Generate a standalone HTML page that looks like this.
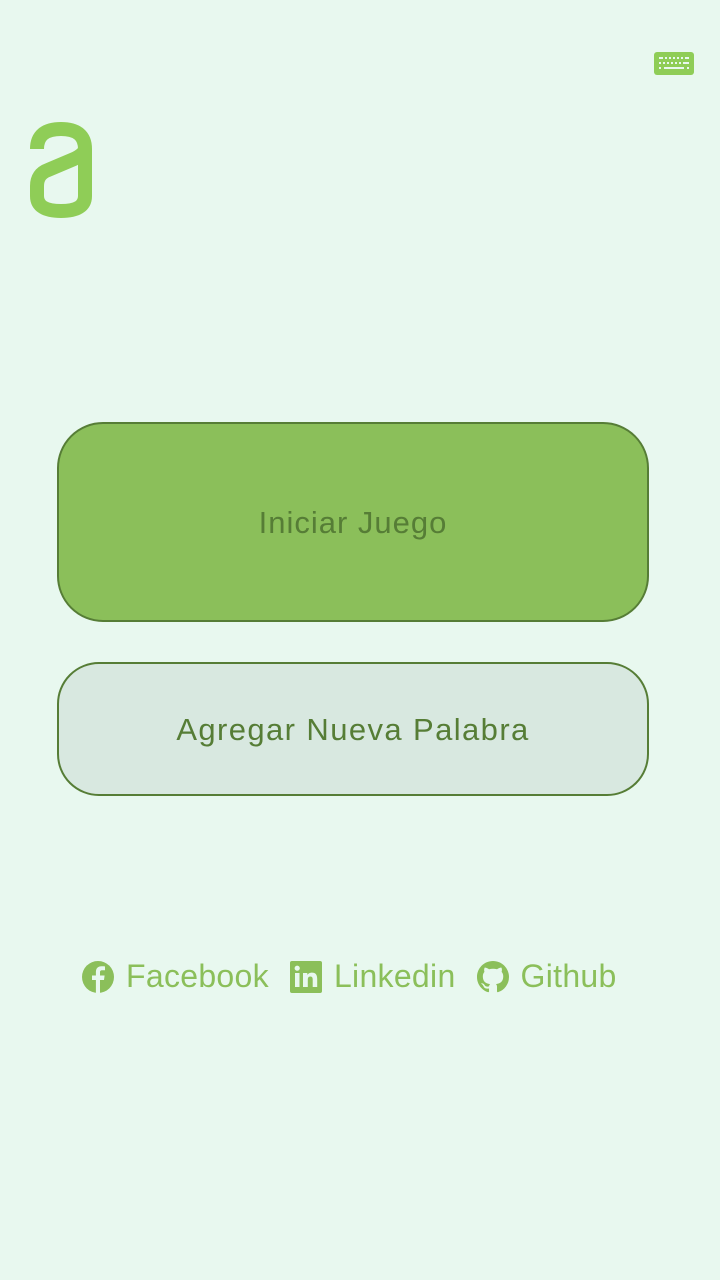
<!DOCTYPE html>
<html><head><meta charset="utf-8"><style>
html,body{margin:0;padding:0;background:#e8f8ef;width:720px;height:1280px;overflow:hidden;font-family:"Liberation Sans",sans-serif;position:relative}
.btn{position:absolute;left:57px;width:592px;border:2px solid #567d36;box-sizing:border-box;border-radius:46px;display:flex;align-items:center;justify-content:center;color:#567d36;font-size:31px;letter-spacing:1px}
.b1{top:422px;height:200px;background:#8bbf5a}
.b2{top:662px;height:134px;background:#d8e8e0;border-radius:42px;letter-spacing:1.4px}
.b1 div{margin-top:2px}
.b2 div{margin-top:2px}
.soc{position:absolute;top:958px;left:82px;color:#8bbf5a;font-size:32px;display:flex;align-items:center;white-space:nowrap;letter-spacing:0.3px}
.soc span{margin-left:12px;margin-right:21px}
</style></head><body>
<svg style="position:absolute;left:654px;top:52px" width="40" height="23" viewBox="0 0 40 23">
<rect width="40" height="23" rx="3" fill="#8fcd57"/>
<g fill="#e8f8ef">
<rect x="5" y="5" width="4" height="2"/><rect x="11" y="5" width="2" height="2"/><rect x="15" y="5" width="2" height="2"/><rect x="19" y="5" width="2" height="2"/><rect x="23" y="5" width="2" height="2"/><rect x="27" y="5" width="2" height="2"/><rect x="31" y="5" width="4" height="2"/>
<rect x="5" y="10" width="2" height="2"/><rect x="9" y="10" width="2" height="2"/><rect x="13" y="10" width="2" height="2"/><rect x="17" y="10" width="2" height="2"/><rect x="21" y="10" width="2" height="2"/><rect x="25" y="10" width="2" height="2"/><rect x="29" y="10" width="6" height="2"/>
<rect x="5" y="15" width="2" height="2"/><rect x="10" y="15" width="20" height="2"/><rect x="33" y="15" width="2" height="2"/>
</g></svg>
<svg style="position:absolute;left:28px;top:120px" width="68" height="100" viewBox="0 0 68 100">
<path d="M9 29 Q9 9 33 9 Q57 9 57 29 V76 Q57 91 33 91 Q9 91 9 76 V66 Q9 54 20 50 L46 39 Q57 34 57 28" fill="none" stroke="#8fcd57" stroke-width="14" stroke-linejoin="round"/>
</svg>
<div class="btn b1"><div>Iniciar Juego</div></div>
<div class="btn b2"><div>Agregar Nueva Palabra</div></div>
<div class="soc">
<svg width="32" height="32" viewBox="0 0 32 32"><circle cx="16" cy="16" r="16" fill="#8bbf5a"/><path d="M18 32V19h4l.6-4.5H18v-3c0-1.3.4-2.2 2.3-2.2H23V5.4C22.5 5.3 21 5.2 19.5 5.2c-3.5 0-5.6 2-5.6 5.8v3.5H10V19h3.9v13z" fill="#e8f8ef"/></svg><span>Facebook</span>
<svg width="32" height="32" viewBox="0 0 32 32"><rect width="32" height="32" rx="2" fill="#8bbf5a"/><rect x="5" y="12" width="4.5" height="14" fill="#e8f8ef"/><circle cx="7.2" cy="7.2" r="2.6" fill="#e8f8ef"/><path d="M13 12h4.3v2c.7-1.3 2.3-2.4 4.6-2.4 4.5 0 5.3 3 5.3 6.8V26h-4.5v-6.8c0-1.6 0-3.7-2.3-3.7s-2.6 1.8-2.6 3.6V26H13z" fill="#e8f8ef"/></svg><span>Linkedin</span>
<svg width="32" height="32" viewBox="0 0 16 16"><path fill="#8bbf5a" d="M8 0C3.58 0 0 3.580 0 8c0 3.54 2.29 6.53 5.47 7.59.4.07.55-.17.55-.38 0-.19-.01-.82-.01-1.49-2.01.37-2.53-.49-2.690-.94-.09-.23-.48-.94-.82-1.13-.28-.15-.68-.52-.01-.53.63-.01 1.08.58 1.23.82.72 1.21 1.870.87 2.330.66.07-.52.28-.87.51-1.07-1.78-.2-3.64-.89-3.64-3.95 0-.87.31-1.59.82-2.15-.08-.2-.36-1.02.08-2.12 0 0 .67-.21 2.2.82.64-.18 1.32-.27 2-.27.68 0 1.36.09 2 .27 1.53-1.04 2.2-.82 2.2-.82.44 1.1.16 1.92.08 2.12.51.56.82 1.27.82 2.15 0 3.07-1.87 3.75-3.65 3.95.29.25.54.73.54 1.48 0 1.07-.01 1.93-.01 2.2 0 .21.15.46.55.38A8.013 8.013 0 0016 8c0-4.42-3.58-8-8-8z"/></svg><span>Github</span>
</div>
</body></html>
